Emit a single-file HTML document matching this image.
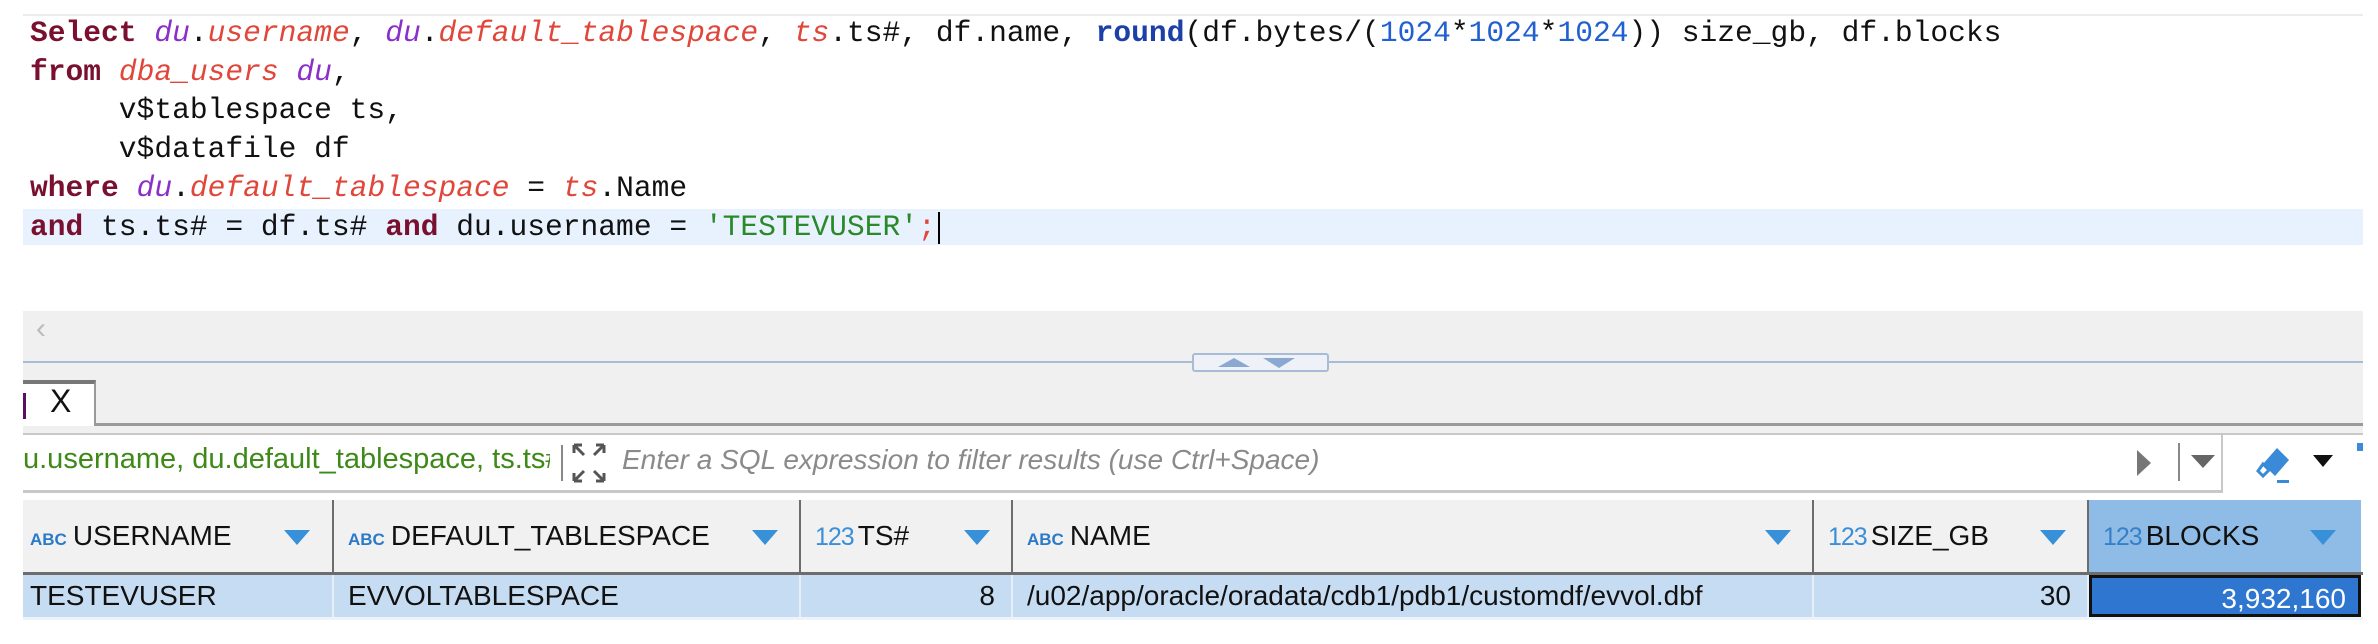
<!DOCTYPE html>
<html><head><meta charset="utf-8"><style>
*{margin:0;padding:0;box-sizing:border-box}
body{width:2378px;height:644px;background:#fff;position:relative;overflow:hidden;font-family:"Liberation Sans",sans-serif}
.a{position:absolute}
.code{font-family:"Liberation Mono",monospace;font-size:29.6px;white-space:pre;color:#111;left:30px;line-height:38.7px}
.k{color:#7a1030;font-weight:bold}
.p{color:#8b2fc9;font-style:italic}
.r{color:#e0463a;font-style:italic}
.b{color:#1d3fa8;font-weight:bold}
.n{color:#2060d0}
.g{color:#2a8a2a}
.hd{font-size:28px;color:#111;top:500px;height:72px;line-height:72px;background:#f1f1f1;border-right:2px solid #6d6d6d}
.ic{font-size:17px;font-weight:bold;color:#2a7ac8;margin-right:6px}
.ic2{color:#3a8fd8;font-size:25px;margin-right:4px;letter-spacing:-1px}
.tri{position:absolute;top:30px;width:0;height:0;border-left:13px solid transparent;border-right:13px solid transparent;border-top:15px solid #3890d8}
.cell{font-size:28px;color:#111;top:575px;height:42px;line-height:42px;background:#c6dcf2;border-right:2px solid #e6eef8}
</style></head><body>
<div class="a" style="left:23px;top:14px;width:2340px;height:2px;background:#ececec"></div>
<div class="a" style="left:23px;top:209px;width:2340px;height:36px;background:#e8f2fe"></div>
<div class="a code" style="top:14px"><span class="k">Select</span> <span class="p">du</span>.<span class="r">username</span>, <span class="p">du</span>.<span class="r">default_tablespace</span>, <span class="r">ts</span>.ts#, df.name, <span class="b">round</span>(df.bytes/(<span class="n">1024</span>*<span class="n">1024</span>*<span class="n">1024</span>)) size_gb, df.blocks
<span class="k">from</span> <span class="r">dba_users</span> <span class="p">du</span>,
     v$tablespace ts,
     v$datafile df
<span class="k">where</span> <span class="p">du</span>.<span class="r">default_tablespace</span> = <span class="r">ts</span>.Name
<span class="k">and</span> ts.ts# = df.ts# <span class="k">and</span> du.username = <span class="g">'TESTEVUSER'</span><span style="color:#e0463a">;</span></div>
<div class="a" style="left:938px;top:212px;width:2px;height:32px;background:#000"></div>

<div class="a" style="left:23px;top:311px;width:2340px;height:124px;background:#f0f0f0"></div>
<div class="a" style="left:36px;top:312px;font-size:30px;color:#bbb">‹</div>
<div class="a" style="left:23px;top:361px;width:2340px;height:2px;background:#a9bcd6"></div>
<div class="a" style="left:1192px;top:353px;width:137px;height:19px;background:#eef2f8;border:2px solid #a9bcd6;border-radius:3px"></div>
<div class="a" style="left:1218px;top:358px;width:0;height:0;border-left:16px solid transparent;border-right:16px solid transparent;border-bottom:9px solid #8aa8d0"></div>
<div class="a" style="left:1263px;top:358px;width:0;height:0;border-left:16px solid transparent;border-right:16px solid transparent;border-top:10px solid #8aa8d0"></div>
<div class="a" style="left:23px;top:423px;width:2340px;height:3px;background:#9a9a9a"></div>
<div class="a" style="left:23px;top:380px;width:73px;height:46px;background:#fff;border-right:2px solid #999;border-top:4px solid #777"></div>
<div class="a" style="left:23px;top:393px;width:3px;height:26px;background:#5a1060"></div>
<div class="a" style="left:50px;top:383px;font-size:32px;color:#111">X</div>
<div class="a" style="left:23px;top:433px;width:2340px;height:2px;background:#c8c8c8"></div>
<div class="a" style="left:23px;top:435px;width:2200px;height:58px;background:#fff;border-right:2px solid #c8c8c8;border-bottom:3px solid #c8c8c8"></div>
<div class="a" style="left:23px;top:443px;font-size:29px;color:#3d8a18;width:527px;overflow:hidden;white-space:nowrap">u.username, du.default_tablespace, ts.ts#</div>
<div class="a" style="left:561px;top:445px;width:2px;height:36px;background:#888"></div>
<svg class="a" style="left:570px;top:441px" width="40" height="44" viewBox="0 0 40 44"><g stroke="#555" stroke-width="3" fill="none"><path d="M4 4 L14 14 M4 4 h8 M4 4 v8"/><path d="M34 4 L24 14 M34 4 h-8 M34 4 v8"/><path d="M4 40 L14 30 M4 40 h8 M4 40 v-8"/><path d="M34 40 L24 30 M34 40 h-8 M34 40 v-8"/></g></svg>
<div class="a" style="left:622px;top:444px;font-size:28px;color:#8a8a8a;font-style:italic">Enter a SQL expression to filter results (use Ctrl+Space)</div>
<div class="a" style="left:2137px;top:450px;width:0;height:0;border-top:13px solid transparent;border-bottom:13px solid transparent;border-left:14px solid #777"></div>
<div class="a" style="left:2178px;top:443px;width:2px;height:38px;background:#888"></div>
<div class="a" style="left:2191px;top:455px;width:0;height:0;border-left:12px solid transparent;border-right:12px solid transparent;border-top:13px solid #666"></div>
<svg class="a" style="left:2255px;top:444px" width="40" height="44" viewBox="0 0 40 44"><path d="M22 4 L34 16 L20 32 L8 20 Z" fill="#3a8ad8"/><path d="M8 20 L14 26 L8 32 L3 27 Z" fill="#fff" stroke="#3a8ad8" stroke-width="3"/><rect x="22" y="36" width="12" height="3" fill="#3a8ad8"/></svg>
<div class="a" style="left:2313px;top:455px;width:0;height:0;border-left:10px solid transparent;border-right:10px solid transparent;border-top:12px solid #111"></div>
<div class="a" style="left:2357px;top:443px;width:6px;height:8px;background:#3a8ad8"></div>
<div class="a" style="left:23px;top:493px;width:2340px;height:7px;background:#fff"></div>
<div class="a hd" style="left:23px;width:311px;padding-left:7px"><span class="ic">ABC</span>USERNAME<div class="tri" style="left:261px"></div></div>
<div class="a hd" style="left:334px;width:467px;padding-left:14px"><span class="ic">ABC</span>DEFAULT_TABLESPACE<div class="tri" style="left:418px"></div></div>
<div class="a hd" style="left:801px;width:212px;padding-left:14px"><span class="ic2">123</span>TS#<div class="tri" style="left:163px"></div></div>
<div class="a hd" style="left:1013px;width:801px;padding-left:14px"><span class="ic">ABC</span>NAME<div class="tri" style="left:752px"></div></div>
<div class="a hd" style="left:1814px;width:275px;padding-left:14px"><span class="ic2">123</span>SIZE_GB<div class="tri" style="left:226px"></div></div>
<div class="a hd" style="left:2089px;width:272px;padding-left:14px;background:#8fbce6;border-right:none"><span class="ic2" style="color:#3580c8">123</span>BLOCKS<div class="tri" style="left:221px"></div></div>
<div class="a" style="left:23px;top:572px;width:2340px;height:3px;background:#6d6d6d"></div>
<div class="a cell" style="left:23px;width:311px;padding-left:7px">TESTEVUSER</div>
<div class="a cell" style="left:334px;width:467px;padding-left:14px">EVVOLTABLESPACE</div>
<div class="a cell" style="left:801px;width:212px;text-align:right;padding-right:16px">8</div>
<div class="a cell" style="left:1013px;width:801px;padding-left:14px">/u02/app/oracle/oradata/cdb1/pdb1/customdf/evvol.dbf</div>
<div class="a cell" style="left:1814px;width:275px;text-align:right;padding-right:16px">30</div>
<div class="a cell" style="left:2089px;width:272px;text-align:right;padding-right:12px;background:#2f76d0;color:#fff;border:3px solid #111">3,932,160</div>
<div class="a" style="left:23px;top:617px;width:2340px;height:3px;background:#eef3fa"></div>
</body></html>
